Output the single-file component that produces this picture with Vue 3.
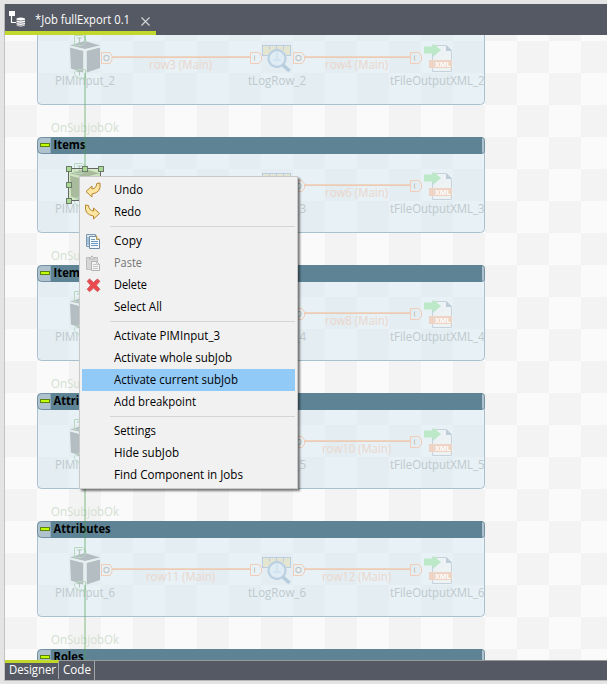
<script setup>
const jobs = [
  { top: 9, n: 2, a: 3, b: 4 },
  { top: 137, title: 'Items', n: 3, a: 5, b: 6, selected: true },
  { top: 265, title: 'Items', n: 4, a: 7, b: 8 },
  { top: 393, title: 'Attributes', n: 5, a: 9, b: 10 },
  { top: 521, title: 'Attributes', n: 6, a: 11, b: 12 },
  { top: 649, title: 'Roles' },
]
const titleWidth = { Items: 32, Attributes: 57, Roles: 30 }
const rowX = (n, base) => (n > 9 ? base - 3 : base)
const rowW = (n) => (n > 9 ? 69 : 63)
const handles = [[66, 29], [82, 29], [98, 29], [66, 45], [98, 45], [66, 61], [82, 61], [98, 61]]

const menu = [
  [{ label: 'Undo', icon: 'undo', w: 29 }, { label: 'Redo', icon: 'redo', w: 27 }],
  [
    { label: 'Copy', icon: 'copy', w: 28 },
    { label: 'Paste', icon: 'paste', w: 28, disabled: true },
    { label: 'Delete', icon: 'delete', w: 33 },
    { label: 'Select All', w: 48 },
  ],
  [
    { label: 'Activate PIMInput_3', w: 106 },
    { label: 'Activate whole subJob', w: 118 },
    { label: 'Activate current subJob', w: 124, active: true },
    { label: 'Add breakpoint', w: 82 },
  ],
  [{ label: 'Settings', w: 42 }, { label: 'Hide subJob', w: 65 }, { label: 'Find Component in Jobs', w: 129 }],
]
</script>

<template>
  <div class="window">
    <header class="tabs">
      <div class="tab">
        <svg class="tab-icon" width="18" height="18" viewBox="0 0 18 18">
          <path d="M1 1h6v5H1z" fill="#fff" />
          <path d="M3.500 6v6.500H8" fill="none" stroke="#fff" stroke-width="1.200" />
          <path d="M8.500 8.500q4-2 8.500 0v7q-4.500 2-8.500 0z" fill="#fff" />
          <path d="M8 10.200q4.500 1.500 9 0M8 12.500q4.500 1.500 9 0M8 14.700q4.500 1.500 9 0" fill="none" stroke="#555963" stroke-width=".7" />
        </svg>
        <svg class="tab-title" width="96" height="20">
          <text x="0" y="14" textLength="95" lengthAdjust="spacingAndGlyphs">*Job fullExport 0.1</text>
        </svg>
        <svg class="close" width="9" height="9" viewBox="0 0 9 9"><path d="M.5.5l8 8M8.500.5l-8 8" stroke="#d5d6d9" stroke-width="1.100" /></svg>
      </div>
    </header>

    <main class="canvas">
      <svg class="diagram" width="602" height="625" viewBox="5 35 602 625">
        <g v-for="j in jobs" :key="j.top" :transform="`translate(0 ${j.top})`">
          <rect x="37.500" y=".5" width="447" height="95" rx="4" fill="#d3e6ef" fill-opacity=".45" stroke="#a9c1cf" />
          <g v-if="j.title">
            <text class="trigger" x="51" y="-5" textLength="68" lengthAdjust="spacingAndGlyphs">OnSubjobOk</text>
            <path d="M51 .5H41.500q-4 0-4 4v8q0 4 4 4H51z" fill="#afc2cd" stroke="#6f91a2" />
            <path d="M480 .5h2q2.500 0 2.500 3v10q0 3-2.500 3h-2z" fill="#afc2cd" stroke="#6f91a2" />
            <path d="M51 0h431v17H51z" fill="#5d8395" />
            <rect x="40.500" y="6.500" width="9" height="3" fill="#c3fb00" stroke="#5c8412" />
            <text class="job-title" x="53.500" y="12" :textLength="titleWidth[j.title]" lengthAdjust="spacingAndGlyphs">{{ j.title }}</text>
          </g>

          <g v-if="j.n">
            <rect v-if="j.selected" x="69" y="32" width="32" height="32" fill="#d3eac5" />
            <g :fill="j.selected ? '#a9bb9d' : '#b4bdc1'">
              <path d="M70 36.500L85 32l15 4.500L85 40z" />
              <path d="M70 38.500l13.200 3.500v21.500L71 59.500z" />
              <path d="M100 38.500L86.800 42v21.500L100 59z" />
            </g>
            <path d="M70 37.500l15 3.500 15-3.500M85 41v23" fill="none" :stroke="j.selected ? '#cfe2c4' : '#e7efef'" stroke-width="1.600" />
            <text class="name" x="55" y="76" textLength="60" lengthAdjust="spacingAndGlyphs">PIMInput_{{ j.n }}</text>
            <g class="green">
              <path d="M74.500 26.500h8l3 3v4l-3 3h-8zM85.500 60.500h-8l-3 3v2l3 3.500h8z" />
              <path d="M77 29h5M79.500 29v5M78 34h3M77 62.500h5M79.500 62.500v4" class="mark" />
            </g>

            <path class="link" d="M112 48.200h139M304 48.200h107" />
            <g class="port">
              <path d="M101.500 43.500h8.500l2 3.500v4l-2 3.500h-8.500zM250.500 43.500h8.500l2.500 3.500v4l-2.500 3.500h-8.500zM293.500 43.500h8.500l2.500 3.500v4l-2.500 3.500h-8.500zM410.500 43.500h8.500l2.500 3.500v4l-2.500 3.500h-8.500z" />
              <g class="mark">
                <circle cx="106.500" cy="49" r="2.600" /><circle cx="298.500" cy="49" r="2.600" />
                <path d="M254.500 46.500v5M414.500 46.500v5" />
              </g>
            </g>
            <text class="row" :x="rowX(j.a, 149)" y="60" :textLength="rowW(j.a)" lengthAdjust="spacingAndGlyphs">row{{ j.a }} (Main)</text>
            <text class="row" :x="rowX(j.b, 325)" y="60" :textLength="rowW(j.b)" lengthAdjust="spacingAndGlyphs">row{{ j.b }} (Main)</text>

            <rect x="262.500" y="36.500" width="28" height="10" fill="#e5e6d2" stroke="#b9cfe0" />
            <path d="M269.500 36v5M276.500 36v4M283.500 36v5" stroke="#b9cfe0" />
            <circle cx="277" cy="49.500" r="8.500" fill="#e0ecf3" stroke="#bcd1e2" stroke-width="2.400" />
            <path d="M277 44v7M273 51h8" stroke="#c5dcec" />
            <path d="M283 56l6.500 6" stroke="#b7cddf" stroke-width="3.600" />
            <text class="name" x="248" y="76" textLength="58" lengthAdjust="spacingAndGlyphs">tLogRow_{{ j.n }}</text>

            <path d="M432.500 36.500h14l5 5v21h-19z" fill="#edf2f5" stroke="#c6d3dc" />
            <path d="M446 36v6h6z" fill="#bfcdd8" />
            <path d="M429 51h23v8h-23z" fill="#edd4c4" />
            <text class="xml" x="435" y="58" textLength="15.500" lengthAdjust="spacingAndGlyphs">XML</text>
            <path d="M424 37.500h9v-3l8 6.500-8 7v-3.500h-9z" fill="#bce9c7" />
            <text class="name" x="390" y="76" textLength="94.500" lengthAdjust="spacingAndGlyphs">tFileOutputXML_{{ j.n }}</text>
          </g>

          <g v-if="j.selected">
            <rect x="68.500" y="31.500" width="32" height="32" fill="none" stroke="#666" />
            <rect v-for="(h, i) in handles" :key="i" :x="h[0] + .5" :y="h[1] + .5" width="5" height="5" fill="#a8d796" stroke="#707a6c" />
          </g>
        </g>
        <path class="wire" d="M85 35v6M85 73v93M85 201v96M85 329v96M85 457v96M85 585v75" />
      </svg>
    </main>

    <footer class="views">
      <div class="view current"><svg width="48" height="18"><text x="0" y="13" textLength="47" lengthAdjust="spacingAndGlyphs">Designer</text></svg></div>
      <div class="view"><svg width="28" height="18"><text x="0" y="13" textLength="28" lengthAdjust="spacingAndGlyphs">Code</text></svg></div>
    </footer>

    <nav class="menu">
      <ul v-for="(group, g) in menu" :key="g" class="group">
        <li v-for="m in group" :key="m.label" class="item" :class="{ active: m.active, disabled: m.disabled }">
          <span class="icon">
            <svg v-if="m.icon" width="16" height="16" viewBox="0 0 16 16">
              <path v-if="m.icon === 'undo'" d="M1 9.500L7 4v3q4.500-.5 4.800-5.500L15 1q1.500 9.500-8 11v3z" fill="#fde6a0" stroke="#b58332" stroke-linejoin="round" />
              <path v-if="m.icon === 'redo'" d="M14.500 9.500L8.500 4v3Q4 6.500 3.500 1.500L.5 1q-1.500 9.500 8 11v3z" fill="#fde6a0" stroke="#b58332" stroke-linejoin="round" />
              <g v-if="m.icon === 'copy'">
                <path d="M1.500 1.500h9v12h-9z" fill="#dce9f2" stroke="#7d97ac" />
                <path d="M4.500 3.500h7l3 3v9h-10z" fill="#f5faff" stroke="#6e8ca5" />
                <path d="M11.500 2.500v4h3" fill="#e9d49b" stroke="#b59b58" />
                <path d="M6 6.500h4M6 8.500h7M6 10.500h7M6 12.500h7M3 4v8" stroke="#6a99c4" />
              </g>
              <g v-if="m.icon === 'paste'">
                <path d="M1.500 2.500h11v12h-11z" fill="#d6d6d6" stroke="#bdbdbd" />
                <path d="M4.500 4V2.500h1.500L7 .8l1.200 1.700h1.500V4z" fill="#eee" stroke="#b5b5b5" />
                <path d="M6.500 6.500h5l3 3v6h-8z" fill="#f4f4f4" stroke="#b3b3b3" />
                <path d="M8 9.500h3M8 11.500h5M8 13.500h5M11.500 6.500v3h3" fill="none" stroke="#c4c4c4" />
              </g>
              <path v-if="m.icon === 'delete'" d="M4.500 2l4 3.500 4-3.500L14.800 4.300 11.300 8.300l3.500 4-2.300 2.300-4-3.500-4 3.500-2.300-2.300 3.500-4-3.500-4z" fill="#ec4a50" stroke="#cf5558" stroke-linejoin="round" />
            </svg>
          </span>
          <svg class="label" width="150" height="22"><text x="0" y="15" :textLength="m.w" lengthAdjust="spacingAndGlyphs">{{ m.label }}</text></svg>
        </li>
      </ul>
    </nav>
  </div>
</template>

<style>
body { margin: 0; }
</style>

<style scoped>
.window {
  position: relative;
  box-sizing: border-box;
  width: 607px;
  height: 684px;
  padding: 4px 0 0 4px;
  display: flex;
  flex-direction: column;
  background: #e4e4e4;
  font: 12px "Open Sans", "Noto Sans", sans-serif;
  overflow: hidden;
}
svg { display: block; flex: none; }
.tabs { height: 31px; flex: none; background: #555963; border-left: 1px solid #b9b9b9; }
.tab {
  box-sizing: border-box;
  display: flex;
  align-items: flex-start;
  width: 151px;
  height: 31px;
  padding-left: 3px;
  border-bottom: 4px solid #c3d82c;
}
.tab-icon { margin: 6px 9px 0 0; }
.tab-title { margin-top: 6px; fill: #fff; }
.close { margin: 13px 0 0 10px; }
.canvas {
  height: 625px;
  flex: none;
  border-left: 1px solid #c3c3c3;
  background: repeating-conic-gradient(#fafafa 0 25%, #f3f3f3 0 50%) 0 6px / 64px 64px;
}
.trigger { fill: #d3dfd2; }
.name { fill: #bdc9ce; }
.row { fill: #ead6cc; }
.job-title { fill: #000; font-weight: 700; }
.xml { fill: #fff; font-size: 7px; font-weight: 700; }
.green path { fill: none; stroke: #b9d9bf; }
.green .mark { stroke: #b4c8ba; }
.port path { fill: none; stroke: #efcdb6; }
.port .mark path, .port .mark circle { fill: none; stroke: #c6c9c8; stroke-width: 1.200; }
.link { stroke: #edcbb2; stroke-width: 1.800; }
.wire { fill: none; stroke: #4aa050; stroke-opacity: .34; stroke-width: 2; }
.views {
  box-sizing: border-box;
  display: flex;
  height: 21px;
  flex: none;
  background: #555963;
  border-top: 1px solid #999;
  border-bottom: 1px solid #b5b8bb;
  border-left: 1px solid #c3c3c3;
  fill: #fff;
}
.view { box-sizing: border-box; height: 19px; padding: 0 3px 0 4px; border-right: 1px solid #a5a6aa; }
.view.current { width: 54px; border-top: 3px solid #c3d82c; margin-top: -1px; }
.view.current svg { margin-top: -2px; }
.menu {
  position: absolute;
  left: 79px;
  top: 176px;
  box-sizing: border-box;
  width: 219px;
  height: 313px;
  padding: 2px;
  background: #f1f1f1;
  border: 1px solid #c9c9c9;
  box-shadow: 2px 2px 2px rgba(0, 0, 0, .5);
}
.group { list-style: none; margin: 0; padding: 0; }
.group + .group::before {
  content: "";
  display: block;
  height: 1px;
  margin: 3px 0 3px 28px;
  background: #d5d5d5;
}
.item { display: flex; align-items: center; width: 213px; height: 22px; }
.active { background: #91c9f7; }
.disabled { fill: #747474; }
.icon { width: 29px; padding-left: 3px; }
</style>
